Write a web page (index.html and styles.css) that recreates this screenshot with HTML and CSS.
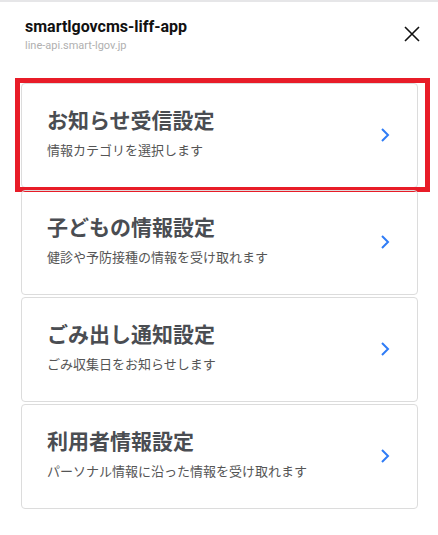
FILE: index.html
```
<!DOCTYPE html>
<html lang="ja">
<head>
    <meta charset="UTF-8">
    <meta name="viewport" content="width=device-width, initial-scale=1.0">
    <title>smartlgovcms-liff-app</title>
    <link rel="stylesheet" href="styles.css">
</head>
<body>

    <div class="header">
        <div class="header-text">
            <div class="app-name">smartlgovcms-liff-app</div>
            <div class="app-domain">line-api.smart-lgov.jp</div>
        </div>
        <button class="close-btn" aria-label="閉じる">
            <svg width="18" height="18" viewBox="0 0 18 18">
                <path d="M2 2 L16 16 M16 2 L2 16" stroke="#111" stroke-width="1.6" fill="none"/>
            </svg>
        </button>
    </div>

    <div class="menu">
        <a class="menu-item selected" href="#">
            <div class="menu-text">
                <div class="menu-title">お知らせ受信設定</div>
                <div class="menu-desc">情報カテゴリを選択します</div>
            </div>
            <svg class="chevron" width="10" height="16" viewBox="0 0 10 16">
                <path d="M2 2 L8 8 L2 14" stroke="#2f7cf6" stroke-width="2" fill="none"/>
            </svg>
        </a>
        <a class="menu-item" href="#">
            <div class="menu-text">
                <div class="menu-title">子どもの情報設定</div>
                <div class="menu-desc">健診や予防接種の情報を受け取れます</div>
            </div>
            <svg class="chevron" width="10" height="16" viewBox="0 0 10 16">
                <path d="M2 2 L8 8 L2 14" stroke="#2f7cf6" stroke-width="2" fill="none"/>
            </svg>
        </a>
        <a class="menu-item" href="#">
            <div class="menu-text">
                <div class="menu-title">ごみ出し通知設定</div>
                <div class="menu-desc">ごみ収集日をお知らせします</div>
            </div>
            <svg class="chevron" width="10" height="16" viewBox="0 0 10 16">
                <path d="M2 2 L8 8 L2 14" stroke="#2f7cf6" stroke-width="2" fill="none"/>
            </svg>
        </a>
        <a class="menu-item" href="#">
            <div class="menu-text">
                <div class="menu-title">利用者情報設定</div>
                <div class="menu-desc">パーソナル情報に沿った情報を受け取れます</div>
            </div>
            <svg class="chevron" width="10" height="16" viewBox="0 0 10 16">
                <path d="M2 2 L8 8 L2 14" stroke="#2f7cf6" stroke-width="2" fill="none"/>
            </svg>
        </a>
    </div>

</body>
</html>
```

FILE: styles.css
```
/* styles CSS */
body {
    font-family: Roboto, "Noto Sans CJK JP", sans-serif;
    background-color: white;
    margin: 0;
    padding: 0;
    border-top: 2px solid #e6e6e8;
}

.header {
    display: flex;
    justify-content: space-between;
    align-items: flex-start;
    padding: 15px 17px 0 25px;
    height: 66px;
}

.app-name {
    font-size: 16px;
    font-weight: bold;
    color: #111;
    line-height: 20px;
}

.app-domain {
    font-size: 11px;
    color: #b0b0b0;
    line-height: 16px;
    margin-top: 1px;
}

.close-btn {
    background: none;
    border: none;
    padding: 0;
    margin-top: 8px;
    cursor: pointer;
}

.menu {
    display: flex;
    flex-direction: column;
    gap: 2px;
    padding: 0 20px 0 21px;
}

.menu-item {
    position: relative;
    display: flex;
    align-items: center;
    justify-content: space-between;
    height: 105px;
    box-sizing: border-box;
    padding: 0 27px 8px 25px;
    border: 1px solid #dcdcdc;
    border-radius: 4px;
    text-decoration: none;
}

.menu-item.selected::after {
    content: "";
    position: absolute;
    top: -6px;
    left: -7px;
    right: -13px;
    bottom: -5px;
    border: 5px solid #e81c28;
}

.menu-title {
    font-family: "Noto Sans CJK JP", sans-serif;
    font-size: 21px;
    font-weight: bold;
    color: #4a4d52;
    line-height: 28px;
}

.menu-desc {
    font-family: "Noto Sans CJK JP", sans-serif;
    font-size: 13px;
    color: #555;
    line-height: 18px;
    margin-top: 8px;
}

.chevron {
    flex-shrink: 0;
    margin-top: 7px;
}
```
